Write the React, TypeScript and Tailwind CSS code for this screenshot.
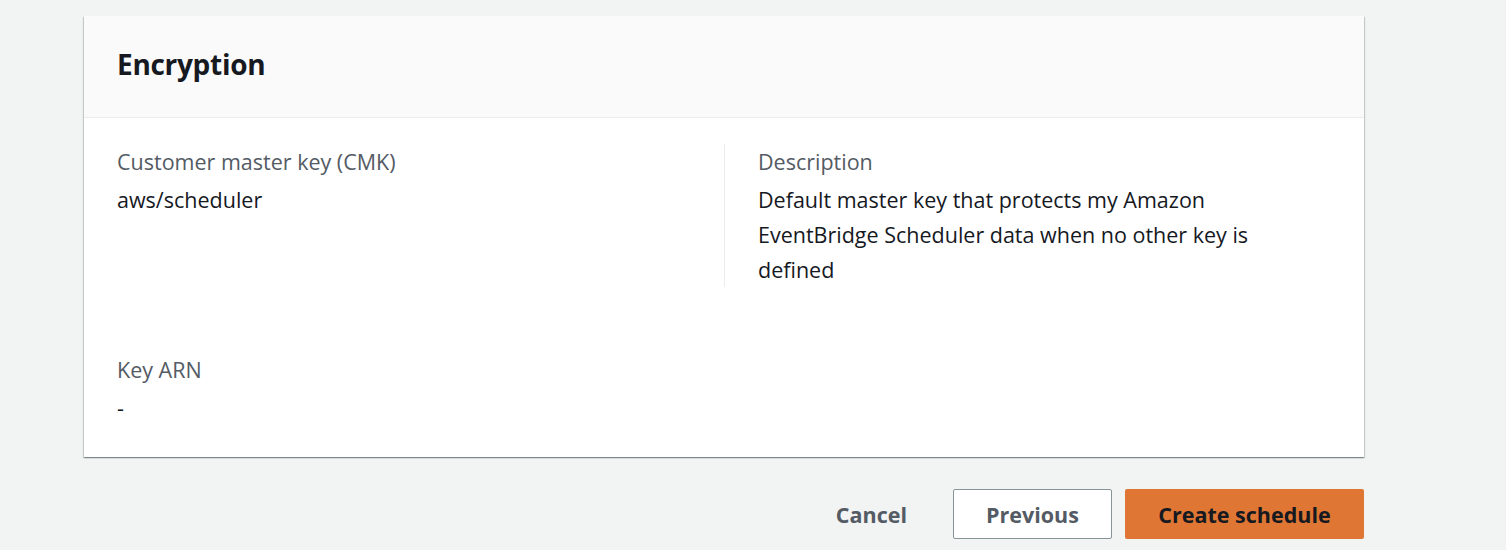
import React from "react";

export default function App() {
  const font = { fontFamily: '"Open Sans", "Liberation Sans", Arial, sans-serif' };
  return (
    <div className="h-[550px] w-full overflow-hidden bg-[#f2f3f3]" style={font}>
      <div className="pl-[84px] pr-[142px] pt-[16px]">
        <div className="bg-white shadow-[0_1px_1px_0_rgba(0,28,36,0.3),1px_1px_1px_0_rgba(0,28,36,0.15),-1px_1px_1px_0_rgba(0,28,36,0.15)]">
          <div className="h-[102px] bg-[#fafafa] border-b border-[#eaeded] px-[33px] pb-[6px] flex items-center">
            <h2 className="text-[28px] font-bold text-[#16191f] tracking-[-0.3px]">Encryption</h2>
          </div>
          <div className="px-[33px] pt-[26px] pb-[32px]">
            <div className="grid grid-cols-2">
              <div>
                <div className="text-[21.5px] leading-[35px] text-[#545b64]">Customer master key (CMK)</div>
                <div className="mt-[3px] text-[21.5px] leading-[35px] text-[#16191f]">aws/scheduler</div>
              </div>
              <div className="border-l border-[#eaeded] pl-[33px]">
                <div className="text-[21.5px] leading-[35px] text-[#545b64]">Description</div>
                <div className="mt-[3px] text-[21.5px] leading-[35px] text-[#16191f] max-w-[520px]">
                  Default master key that protects my Amazon EventBridge Scheduler data when no other key is defined
                </div>
              </div>
            </div>
            <div className="mt-[65px]">
              <div className="text-[21.5px] leading-[35px] text-[#545b64]">Key ARN</div>
              <div className="mt-[3px] text-[21.5px] leading-[35px] text-[#16191f]">-</div>
            </div>
          </div>
        </div>
        <div className="mt-[32px] flex justify-end items-center gap-[13px]">
          <button className="h-[50px] px-[33px] pt-[2px] text-[21.5px] font-bold text-[#545b64]">Cancel</button>
          <button className="h-[50px] w-[159px] pt-[2px] rounded-[2px] border border-[#879596] bg-white text-[21.5px] font-bold text-[#545b64]">Previous</button>
          <button className="h-[50px] w-[239px] pt-[2px] rounded-[2px] bg-[#df7634] text-[21.5px] font-bold text-[#16191f]">Create schedule</button>
        </div>
      </div>
    </div>
  );
}
